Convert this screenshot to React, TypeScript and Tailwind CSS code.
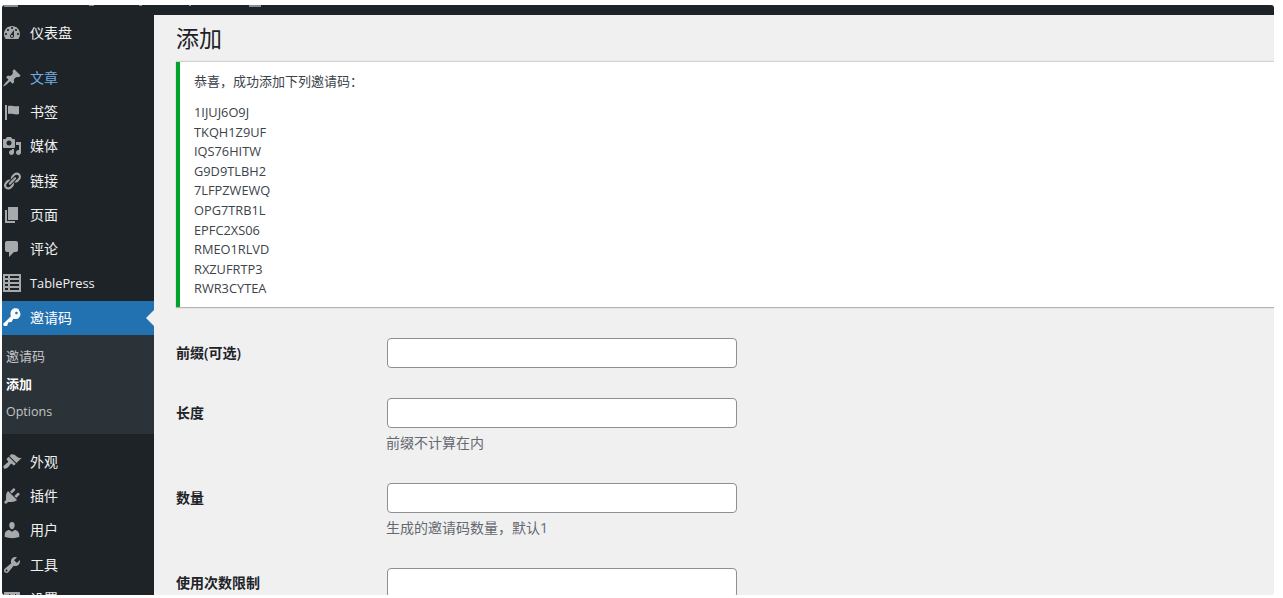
const font = { fontFamily: '"Open Sans", "Noto Sans CJK SC", sans-serif' };

const icons: Record<string, string> = {
  dashboard: "M3.76 16h12.48c1.1-1.37 1.76-3.11 1.76-5 0-4.42-3.58-8-8-8s-8 3.58-8 8c0 1.89.66 3.63 1.76 5zM10 4c.55 0 1 .45 1 1s-.45 1-1 1-1-.45-1-1 .45-1 1-1zM6 6c.55 0 1 .45 1 1s-.45 1-1 1-1-.45-1-1 .45-1 1-1zm8 0c.55 0 1 .45 1 1s-.45 1-1 1-1-.45-1-1 .45-1 1-1zm-5.37 5.55L12 7v6c0 1.1-.9 2-2 2s-2-.9-2-2c0-.57.24-1.08.63-1.45zM4 10c.55 0 1 .45 1 1s-.45 1-1 1-1-.45-1-1 .45-1 1-1zm12 0c.55 0 1 .45 1 1s-.45 1-1 1-1-.45-1-1 .45-1 1-1zm-5 3c0-.55-.45-1-1-1s-1 .45-1 1 .45 1 1 1 1-.45 1-1z",
  pin: "M10.44 3.02l1.82-1.82 6.36 6.35-1.83 1.82c-1.05-.68-2.48-.57-3.41.36l-.75.75c-.92.93-1.04 2.35-.35 3.41l-1.83 1.82-2.41-2.41-2.8 2.79c-.42.42-3.38 2.71-3.8 2.29s1.86-3.39 2.28-3.81l2.79-2.79L4.1 9.36l1.83-1.82c1.05.69 2.48.57 3.4-.36l.75-.75c.93-.92 1.05-2.35.36-3.41z",
  flag: "M5 18V3H3v15h2zm1-6V4c3-1 7 1 11 0v8c-3 1.27-8-1-11 0z",
  media: "M13 11V4c0-.55-.45-1-1-1h-1.67L9 1H5L3.67 3H2c-.55 0-1 .45-1 1v7c0 .55.45 1 1 1h10c.55 0 1-.45 1-1zM7 4.5c1.38 0 2.5 1.12 2.5 2.5S8.38 9.5 7 9.5 4.5 8.38 4.5 7 5.62 4.5 7 4.5zM14 6h5v10.5c0 1.38-1.12 2.5-2.5 2.5S14 17.88 14 16.5s1.12-2.5 2.5-2.5c.17 0 .34.02.5.05V9h-3V6zm-4 8.05V13h2v3.5c0 1.38-1.12 2.5-2.5 2.5S7 17.88 7 16.5 8.12 14 9.5 14c.17 0 .34.02.5.05z",
  links: "M17.74 2.76c1.68 1.69 1.68 4.41 0 6.1l-1.53 1.52c-1.12 1.12-2.7 1.47-4.14 1.09l2.62-2.61.76-.77.76-.76c.84-.84.84-2.2 0-3.04-.84-.85-2.2-.85-3.04 0l-.77.76-3.38 3.38c-.37-1.44-.02-3.02 1.1-4.14l1.52-1.53c1.69-1.68 4.42-1.68 6.1 0zM8.59 13.43l5.34-5.34c.42-.42.42-1.1 0-1.52-.44-.43-1.13-.39-1.53 0l-5.33 5.34c-.42.42-.42 1.1 0 1.52.44.43 1.13.39 1.52 0zm-.76 2.29l4.14-4.15c.38 1.44.03 3.02-1.09 4.14l-1.52 1.53c-1.69 1.68-4.41 1.68-6.1 0-1.68-1.68-1.68-4.42 0-6.1l1.53-1.52c1.12-1.12 2.7-1.47 4.14-1.1l-4.14 4.15c-.85.84-.85 2.2 0 3.05.84.84 2.2.84 3.04 0z",
  page: "M6 15V2h10v13H6zm-1 1h8v2H3V5h2v11z",
  comment: "M5 2h9c1.1 0 2 .9 2 2v7c0 1.1-.9 2-2 2h-2l-5 5v-5H5c-1.1 0-2-.9-2-2V4c0-1.1.9-2 2-2z",
  table: "M1 1h18v18H1V1zm2 2v2h3V3H3zm5 0v2h9V3H8zM3 7v2h3V7H3zm5 0v2h9V7H8zm-5 4v2h3v-2H3zm5 0v2h9v-2H8zm-5 4v2h3v-2H3zm5 0v2h9v-2H8z",
  key: "M16.95 2.58c1.96 1.95 1.96 5.12 0 7.07-1.51 1.51-3.75 1.84-5.59 1.01l-1.87 3.31-2.99.31L5 18H2l-1-2 7.95-7.69c-.92-2.26-.55-4.93 1.05-6.55 1.95-1.95 5.12-1.95 7.07 0zm-2.51 3.79c.74 0 1.33-.6 1.33-1.34 0-.73-.59-1.33-1.33-1.33-.73 0-1.33.6-1.33 1.33 0 .74.6 1.34 1.33 1.34z",
  brush: "M14.48 11.06L7.41 3.99l1.5-1.5c.5-.56 2.3-.47 3.51.32 1.21.8 1.43 1.28 2.91 2.1 1.18.64 2.45 1.26 4.45.85zm-.71.71L6.7 4.7 4.93 6.47c-.39.39-.39 1.02 0 1.41l1.06 1.06c.39.39.39 1.03 0 1.42-.6.6-1.43 1.11-2.21 1.69-.35.26-.7.53-1.01.84C1.43 13.23.91 15.2 1.88 16.17c.97.97 2.93.44 4.27-.9.3-.31.58-.66.84-1.01.58-.78 1.09-1.61 1.69-2.21.39-.39 1.02-.39 1.41 0l1.06 1.06c.39.39 1.02.39 1.41 0z",
  plugin: "M13.11 4.36L9.87 7.6 8 5.73l3.24-3.24c.35-.34 1.05-.2 1.56.32.52.51.66 1.21.31 1.55zm-8 1.77l.91-1.12 9.01 9.01-1.19.84c-.71.71-2.63 1.16-3.82 1.16H6.14L4.9 17.26c-.59.59-1.54.59-2.12 0-.59-.58-.59-1.53 0-2.12l1.24-1.24v-3.88c0-1.13.4-3.19 1.09-3.89zm7.26 3.97l3.24-3.24c.34-.35 1.04-.21 1.55.31.52.51.66 1.21.31 1.55l-3.24 3.25z",
  user: "M10 9.25c-2.27 0-2.73-3.44-2.73-3.44C7 4.02 7.82 2 9.97 2c2.16 0 2.98 2.02 2.71 3.81 0 0-.41 3.44-2.68 3.44zm0 2.57L12.72 10c2.39 0 4.52 2.33 4.52 4.53v2.49s-3.65 1.13-7.24 1.13c-3.65 0-7.24-1.13-7.24-1.13v-2.49c0-2.25 1.94-4.48 4.47-4.48z",
  tools: "M16.68 9.77c-1.34 1.34-3.3 1.67-4.95.99l-5.41 6.52c-.99.99-2.59.99-3.58 0s-.99-2.59 0-3.57l6.52-5.42c-.68-1.65-.35-3.61.99-4.95 1.28-1.28 3.12-1.62 4.72-1.06l-2.89 2.89 2.82 2.82 2.86-2.87c.53 1.58.18 3.39-1.08 4.65zM3.81 16.21c.4.39 1.04.39 1.43 0 .4-.4.4-1.04 0-1.43-.39-.4-1.03-.4-1.43 0-.39.39-.39 1.03 0 1.43z",
  settings: "M18 16V4c0-.55-.45-1-1-1H3c-.55 0-1 .45-1 1v12c0 .55.45 1 1 1h14c.55 0 1-.45 1-1zM8 11h1c.55 0 1 .45 1 1s-.45 1-1 1H8v1.5c0 .28-.22.5-.5.5s-.5-.22-.5-.5V13H6c-.55 0-1-.45-1-1s.45-1 1-1h1V5.5c0-.28.22-.5.5-.5s.5.22.5.5V11zm5-2h-1c-.55 0-1-.45-1-1s.45-1 1-1h1V5.5c0-.28.22-.5.5-.5s.5.22.5.5V7h1c.55 0 1 .45 1 1s-.45 1-1 1h-1v5.5c0 .28-.22.5-.5.5s-.5-.22-.5-.5V9z",
};

const topItems = [
  { icon: "pin", label: "文章", blue: true },
  { icon: "flag", label: "书签" },
  { icon: "media", label: "媒体" },
  { icon: "links", label: "链接" },
  { icon: "page", label: "页面" },
  { icon: "comment", label: "评论" },
  { icon: "table", label: "TablePress", small: true },
];
const bottomItems = [
  { icon: "brush", label: "外观" },
  { icon: "plugin", label: "插件" },
  { icon: "user", label: "用户" },
  { icon: "tools", label: "工具" },
  { icon: "settings", label: "设置" },
];
const codes = ["1IJUJ6O9J", "TKQH1Z9UF", "IQS76HITW", "G9D9TLBH2", "7LFPZWEWQ", "OPG7TRB1L", "EPFC2XS06", "RMEO1RLVD", "RXZUFRTP3", "RWR3CYTEA"];

function MenuIcon({ name, className }: { name: string; className: string }) {
  return (
    <svg viewBox="0 0 20 20" className={`h-5 w-5 shrink-0 fill-current ${className}`}>
      <path fillRule="evenodd" d={icons[name]} />
    </svg>
  );
}

function MenuRow({ icon, label, blue, small }: { icon: string; label: string; blue?: boolean; small?: boolean }) {
  return (
    <div className="flex h-[34.2px] items-center text-sm">
      <MenuIcon name={icon} className="text-[#a7aaad]" />
      <span className={`ml-2 ${small ? "text-[12.8px]" : ""} ${blue ? "text-[#72aee6]" : "text-[#f0f0f1]"}`}>{label}</span>
    </div>
  );
}

function Field({ label, hint, className }: { label: string; hint?: string; className: string }) {
  return (
    <div className={`flex ${className}`}>
      <label className="w-[211px] pt-[6px] text-sm leading-[18px] font-semibold text-[#1d2327]">{label}</label>
      <div>
        <input type="text" className="block h-[30px] w-[350px] rounded-[4px] border border-[#8c8f94] bg-white" />
        {hint && <p className="mt-[5px] -ml-[1px] text-sm leading-[20px] text-[#646970]">{hint}</p>}
      </div>
    </div>
  );
}

export default function App() {
  return (
    <div className="h-[598px] w-[1283px] overflow-hidden bg-white pt-[5px] pl-[2px]" style={font}>
      <div className="flex h-[590px] w-[1272px] flex-col overflow-hidden rounded-[3px] bg-[#f0f0f1]">
        {/* bottom edge of the toolbar icons, the rest is scrolled away */}
        <div className="flex h-[10px] shrink-0 items-start bg-[#1d2327]">
          <span className="ml-[2px] h-[2px] w-[14px] bg-[#8a8d90]" />
          <span className="ml-[71px] h-px w-[5px] bg-[#8a8d90]" />
          <span className="ml-[45px] h-px w-[3px] bg-[#8a8d90]" />
          <span className="ml-[47px] h-px w-[2px] bg-[#8a8d90]" />
          <span className="ml-[58px] h-[2px] w-[12px] bg-[#8a8d90]" />
        </div>
        <div className="flex min-h-0 flex-1">
          <aside className="w-[152px] shrink-0 overflow-hidden bg-[#1d2327]">
            <div className="flex h-[36px] items-center text-sm">
              <MenuIcon name="dashboard" className="text-[#a7aaad]" />
              <span className="ml-2 text-[#f0f0f1]">仪表盘</span>
            </div>
            <div className="mt-[10px] mb-[0.6px]">
              {topItems.map((item) => (
                <MenuRow key={item.label} {...item} />
              ))}
            </div>
            <div className="relative flex h-[34px] items-center bg-[#2271b1] text-sm text-white">
              <MenuIcon name="key" className="text-white" />
              <span className="ml-2">邀请码</span>
              <span className="absolute top-[9px] right-0 border-y-[8px] border-r-[8px] border-y-transparent border-r-[#f0f0f1]" />
            </div>
            <div className="flex h-[99px] flex-col justify-center bg-[#2c3338] pl-[4px] text-[13px] leading-[28px] text-[#c3c4c7]">
              <div>邀请码</div>
              <div className="font-semibold text-white">添加</div>
              <div className="text-[12.5px]">Options</div>
            </div>
            <div className="mt-[11px]">
              {bottomItems.map((item) => (
                <MenuRow key={item.label} {...item} />
              ))}
            </div>
          </aside>
          <main className="min-w-0 flex-1 pl-[22px]">
            <h1 className="mt-[8px] text-[23px] leading-[30px] font-normal text-[#1d2327]">添加</h1>
            <div className="mt-[9px] h-[245px] border-l-4 border-[#00a32a] bg-white pt-[9px] pl-[14px] text-[13px] text-[#3c434a] shadow-[0_1px_1px_rgba(0,0,0,0.25),0_-1px_1px_rgba(0,0,0,0.12)]">
              <p className="leading-[20px]">恭喜，成功添加下列邀请码：</p>
              <div className="mt-[12px] text-[12.8px] leading-[19.6px]">
                {codes.map((code) => (
                  <div key={code}>{code}</div>
                ))}
              </div>
            </div>
            <Field label="前缀(可选)" className="mt-[31px]" />
            <Field label="长度" hint="前缀不计算在内" className="mt-[30px]" />
            <Field label="数量" hint="生成的邀请码数量，默认1" className="mt-[30px]" />
            <Field label="使用次数限制" className="mt-[30px]" />
          </main>
        </div>
      </div>
    </div>
  );
}
